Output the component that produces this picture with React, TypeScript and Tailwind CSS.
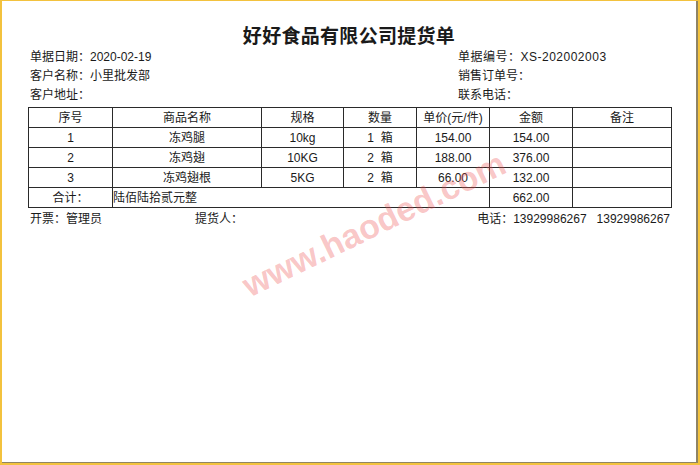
import React from "react";

const rows = [
  { no: "1", name: "冻鸡腿", spec: "10kg", qty: "1 箱", price: "154.00", amount: "154.00" },
  { no: "2", name: "冻鸡翅", spec: "10KG", qty: "2 箱", price: "188.00", amount: "376.00" },
  { no: "3", name: "冻鸡翅根", spec: "5KG", qty: "2 箱", price: "66.00", amount: "132.00" },
];

const cell = "border border-[#2a2a2a] text-center p-0 leading-none";

export default function App() {
  return (
    <div
      className="w-[700px] h-[465px] bg-white border-l-2 border-t border-r-2 border-b-2 border-[#f3c23e] text-[12px] text-[#1a1a1a]"
      style={{ fontFamily: '"Liberation Sans", "Noto Sans CJK SC", sans-serif' }}
    >
      <div className="relative w-full h-full border-r-2 border-b border-[#8f8464] pl-[26px] pt-[24px] overflow-hidden">
        {/* title */}
        <h1 className="h-[23px] text-center text-[19px] font-bold leading-[23px] pr-[26px] tracking-[0.3px]">
          好好食品有限公司提货单
        </h1>

        {/* header info */}
        <div className="flex pl-[2px]">
          <div className="w-[428px] flex flex-col">
            <p className="h-[19px] leading-[19px]">单据日期：2020-02-19</p>
            <p className="h-[19px] leading-[19px]">客户名称：小里批发部</p>
            <p className="h-[19px] leading-[19px]">客户地址：</p>
          </div>
          <div className="flex flex-col">
            <p className="h-[19px] leading-[19px] tracking-[0.5px]">单据编号：XS-202002003</p>
            <p className="h-[19px] leading-[19px]">销售订单号：</p>
            <p className="h-[19px] leading-[19px]">联系电话：</p>
          </div>
        </div>

        {/* items */}
        <table className="mt-[2px] w-[643px] table-fixed border-collapse">
          <colgroup>
            <col className="w-[84px]" />
            <col className="w-[149px]" />
            <col className="w-[82px]" />
            <col className="w-[73px]" />
            <col className="w-[73px]" />
            <col className="w-[83px]" />
            <col className="w-[99px]" />
          </colgroup>
          <thead>
            <tr className="h-[20px]">
              <th className={`${cell} font-normal`}>序号</th>
              <th className={`${cell} font-normal`}>商品名称</th>
              <th className={`${cell} font-normal`}>规格</th>
              <th className={`${cell} font-normal`}>数量</th>
              <th className={`${cell} font-normal whitespace-nowrap`}>单价(元/件)</th>
              <th className={`${cell} font-normal`}>金额</th>
              <th className={`${cell} font-normal`}>备注</th>
            </tr>
          </thead>
          <tbody>
            {rows.map((r) => (
              <tr key={r.no} className="h-[20px]">
                <td className={cell}>{r.no}</td>
                <td className={cell}>{r.name}</td>
                <td className={cell}>{r.spec}</td>
                <td className={`${cell} whitespace-pre`}>{r.qty.replace(" ", "  ")}</td>
                <td className={cell}>{r.price}</td>
                <td className={cell}>{r.amount}</td>
                <td className={cell}></td>
              </tr>
            ))}
            <tr className="h-[20px]">
              <td className={cell}>合计：</td>
              <td colSpan={4} className={`${cell} text-left`}>陆佰陆拾贰元整</td>
              <td className={cell}>662.00</td>
              <td className={cell}></td>
            </tr>
          </tbody>
        </table>

        {/* footer */}
        <div className="flex w-[643px] h-[22px] items-center pl-[2px]">
          <span className="w-[165px]">开票：管理员</span>
          <span>提货人：</span>
          <span className="ml-auto mr-[1px] whitespace-pre">电话：13929986267   13929986267</span>
        </div>

        {/* watermark */}
        <div className="absolute left-[228px] top-[206px] -rotate-[26deg] text-[34px] font-bold leading-none text-[rgba(236,80,80,0.32)] pointer-events-none select-none">
          www.haoded.com
        </div>
      </div>
    </div>
  );
}
